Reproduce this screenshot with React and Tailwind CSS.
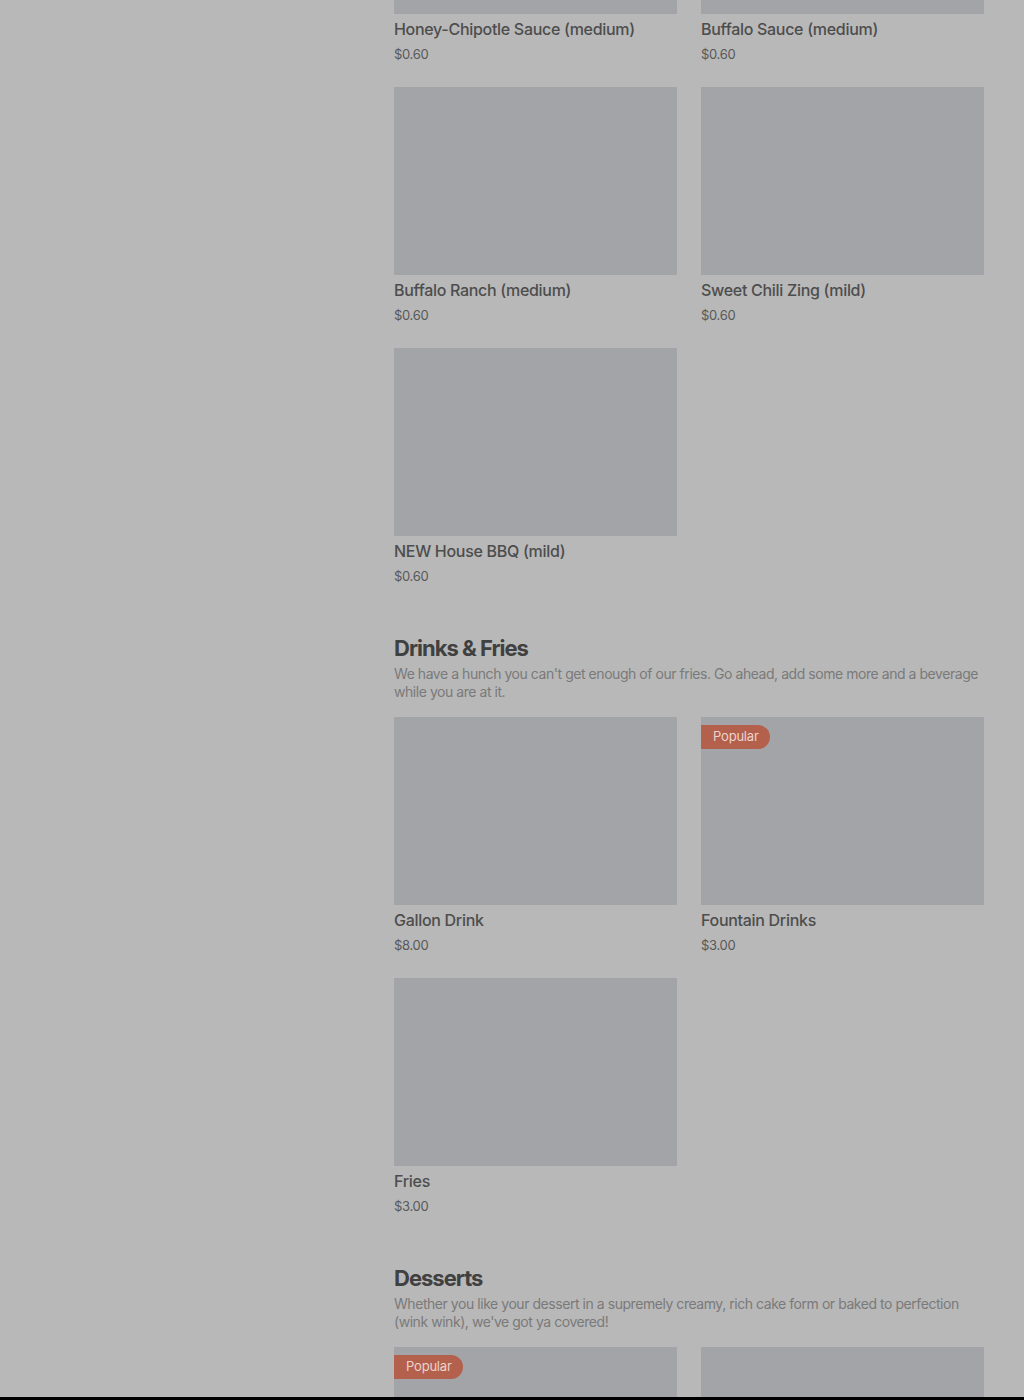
const sauces = [
  { name: "Honey-Chipotle Sauce (medium)", price: "$0.60" },
  { name: "Buffalo Sauce (medium)", price: "$0.60" },
  { name: "Buffalo Ranch (medium)", price: "$0.60" },
  { name: "Sweet Chili Zing (mild)", price: "$0.60" },
  { name: "NEW House BBQ (mild)", price: "$0.60" },
];

const drinks = [
  { name: "Gallon Drink", price: "$8.00" },
  { name: "Fountain Drinks", price: "$3.00", popular: true },
  { name: "Fries", price: "$3.00" },
];

const desserts = [
  { name: "", price: "", popular: true },
  { name: "", price: "" },
];

function ItemCard({ item }) {
  return (
    <div className="flex flex-col">
      <div className="relative h-[188px] bg-[#a3a4a8]">
        {item.popular && (
          <span className="absolute left-0 top-2 flex h-6 items-center rounded-r-full bg-[#b3604d] pl-3 pr-[11px] text-[13px] tracking-[-0.2px] text-[#ecd3cc]">
            Popular
          </span>
        )}
      </div>
      {item.name && (
        <>
          <div className="mt-[3px] text-base font-medium leading-6 tracking-[-0.3px] text-[#4d4d4d]">
            {item.name}
          </div>
          <div className="mt-[3px] text-[13px] leading-5 tracking-[-0.3px] text-[#585858]">
            {item.price}
          </div>
        </>
      )}
    </div>
  );
}

function Section({ title, text, items }) {
  return (
    <section className="mt-[46px]">
      <h2 className="text-[22px] font-bold leading-8 tracking-[-1px] text-[#404040]">
        {title}
      </h2>
      <p className="mt-[1px] text-sm leading-[18px] tracking-[-0.45px] text-[#7a7a7a]">
        {text}
      </p>
      <div className="mt-4 grid grid-cols-2 gap-x-6 gap-y-[23px]">
        {items.map((item, i) => (
          <ItemCard key={i} item={item} />
        ))}
      </div>
    </section>
  );
}

export default function App() {
  return (
    <div
      className="h-[1400px] bg-black"
      style={{ fontFamily: "Inter, 'Noto Sans', sans-serif" }}
    >
      <div className="flex h-[1397px] overflow-hidden bg-[#b8b8b8]">
        <aside className="w-[394px] shrink-0" />
        <main className="mt-[-174px] w-[590px] shrink-0">
          <div className="grid grid-cols-2 gap-x-6 gap-y-[23px]">
            {sauces.map((item, i) => (
              <ItemCard key={i} item={item} />
            ))}
          </div>
          <Section
            title="Drinks & Fries"
            text="We have a hunch you can't get enough of our fries. Go ahead, add some more and a beverage while you are at it."
            items={drinks}
          />
          <Section
            title="Desserts"
            text="Whether you like your dessert in a supremely creamy, rich cake form or baked to perfection (wink wink), we've got ya covered!"
            items={desserts}
          />
        </main>
      </div>
    </div>
  );
}
